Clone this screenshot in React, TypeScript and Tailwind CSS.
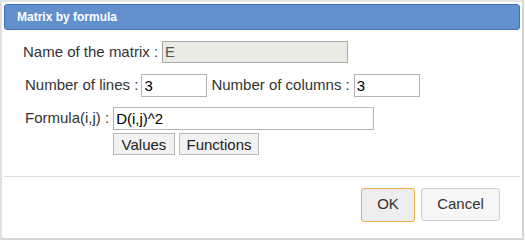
export default function App() {
  return (
    <div className="h-[240px] w-[525px] bg-white" style={{ fontFamily: '"Liberation Sans", Arial, sans-serif' }}>
      <div className="flex h-[240px] w-[524px] flex-col border-2 border-[#d6d6d6] border-t-[#e4e4e4] border-l-[#e0e0e0] bg-white p-[2px]">
        <div className="flex h-[26px] items-center rounded-[3px] border border-[#3f72c2] bg-[#6190cd] pl-[12px] text-[12px] font-bold text-white">
          Matrix by formula
        </div>

        <div className="flex flex-col pt-[11px] text-[15px] text-[#333]">
          <div className="flex items-center pl-[19px]">
            <span>Name of the matrix :</span>
            <input
              disabled
              value="E"
              readOnly
              className="ml-[4px] h-[22px] w-[186px] border border-[#a9a9a9] bg-[#ebebe4] px-[2px] text-[15px] text-[#555]"
            />
          </div>

          <div className="mt-[10px] flex items-center pl-[21px]">
            <span>Number of lines :</span>
            <input
              value="3"
              readOnly
              className="ml-[3px] h-[23px] w-[66px] border border-[#b3b3b3] bg-white px-[2px] text-[15px] text-black"
            />
            <span className="ml-[4px]">Number of columns :</span>
            <input
              value="3"
              readOnly
              className="ml-[4px] h-[23px] w-[66px] border border-[#b3b3b3] bg-white px-[2px] text-[15px] text-black"
            />
          </div>

          <div className="mt-[10px] flex items-center pl-[21px]">
            <span>Formula(i,j) :</span>
            <input
              value="D(i,j)^2"
              readOnly
              className="ml-[4px] h-[23px] w-[261px] border border-[#b3b3b3] bg-white px-[2px] text-[15px] text-black"
            />
          </div>

          <div className="mt-[3px] flex gap-[4px] pl-[109px]">
            <button className="h-[22px] w-[62px] border border-[#b8b8b8] bg-[#f2f2f2] text-[15px] text-[#222]">Values</button>
            <button className="h-[22px] w-[80px] border border-[#b8b8b8] bg-[#f2f2f2] text-[15px] text-[#222]">Functions</button>
          </div>
        </div>

        <div className="mt-[21px] h-px bg-[#dcdcdc]" />

        <div className="mt-[11px] flex justify-end gap-[6px] pr-[20px] text-[15px] text-[#333]">
          <button className="h-[34px] w-[54px] rounded-[3px] border border-[#e8ad4a] bg-[#ededed]">OK</button>
          <button className="h-[33px] w-[79px] rounded-[3px] border border-[#cfcfcf] bg-[#f6f6f6]">Cancel</button>
        </div>
      </div>
    </div>
  );
}
